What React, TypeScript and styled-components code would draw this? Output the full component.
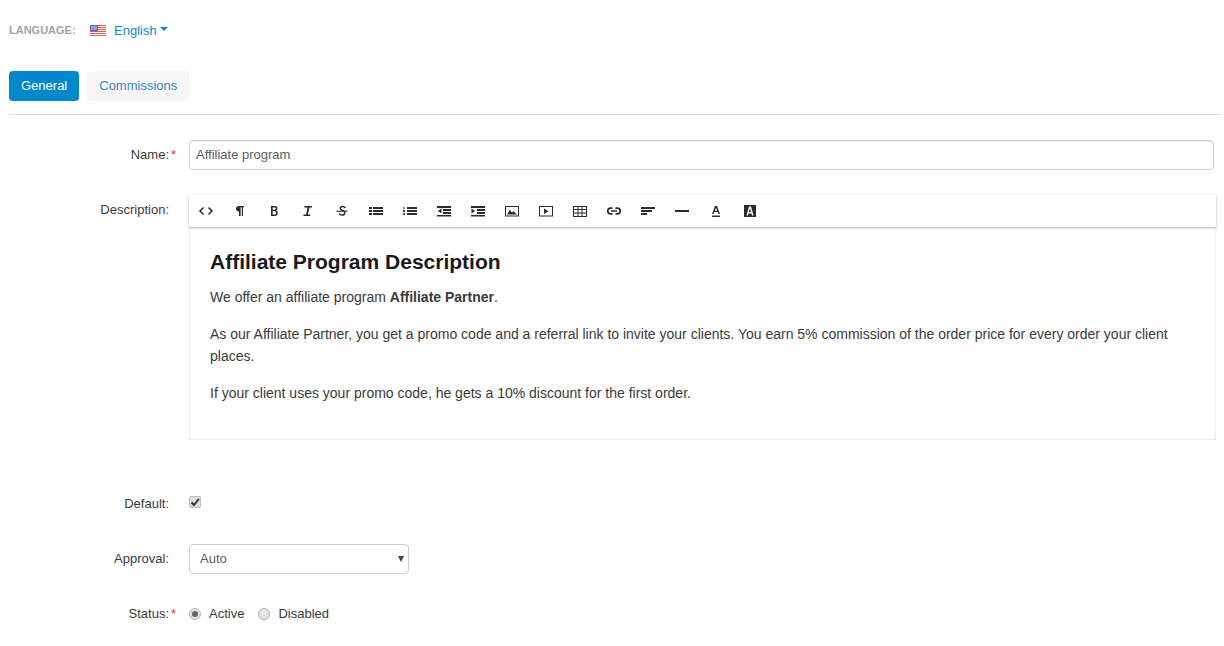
import React from "react";
import styled, { createGlobalStyle } from "styled-components";

const Global = createGlobalStyle`
  html, body { margin: 0; padding: 0; background: #fff; }
  body { font-family: "Liberation Sans", Arial, sans-serif; font-size: 13px; color: #333; }
`;
const Page = styled.div`
  width: 1224px; height: 646px; box-sizing: border-box; padding: 0 3px 0 9px; overflow: hidden;
`;
const LangBar = styled.div`
  display: flex; align-items: center; height: 20px; padding-top: 20px;
`;
const LangLabel = styled.span`
  font-size: 11px; font-weight: 700; color: #a3a3a3; width: 81px;
`;
const LangLink = styled.a`
  display: flex; align-items: center; color: #0d8acd; font-size: 13px; gap: 8px;
`;
const Caret = styled.span`
  display: inline-block; width: 0; height: 0; margin-left: -8px; margin-top: -2px;
  border-left: 4px solid transparent; border-right: 4px solid transparent; border-top: 4px solid #0d8acd;
`;
const Tabs = styled.div`
  display: flex; gap: 8px; margin-top: 31px; padding-bottom: 13px; border-bottom: 1px solid #ddd; height: 30px;
`;
const Tab = styled.div<{ $active?: boolean }>`
  height: 30px; line-height: 30px; padding: 0 12px; border-radius: 4px; font-size: 13px;
  background: ${p => (p.$active ? "#0088cc" : "#f6f6f6")}; color: ${p => (p.$active ? "#fff" : "#3f84c9")};
`;
const Row = styled.div<{ $top: number; $center?: boolean }>`
  display: flex; margin-top: ${p => p.$top}px; align-items: ${p => (p.$center ? "center" : "flex-start")};
`;
const Label = styled.div<{ $pad?: number; $raise?: number }>`
  width: 160px; flex: none; margin-right: 20px; text-align: right; font-size: 13px; color: #3a3a3a; position: relative;
  padding-top: ${p => p.$pad ?? 0}px; margin-bottom: ${p => p.$raise ?? 0}px;
`;
const Star = styled.span`
  position: absolute; left: 162px; top: 0; color: #e8303a; font-size: 13px;
`;
const TextInput = styled.div`
  width: 1025px; height: 30px; box-sizing: border-box; border: 1px solid #ccc; border-radius: 4px;
  padding: 0 6px; line-height: 28px; font-size: 13px; color: #5c5c5c;
  box-shadow: inset 0 1px 1px rgba(0,0,0,.075);
`;
const Editor = styled.div`
  width: 1028px;
`;
const Toolbar = styled.div`
  display: flex; width: 1027px; height: 32px; align-items: center; background: #fff;
  box-shadow: 0 1px 2px rgba(0,0,0,.3), 0 0 2px rgba(0,0,0,.06);
  position: relative;
`;
const ToolBtn = styled.div`
  width: 34px; height: 32px; display: flex; align-items: center; justify-content: center;
`;
const Body = styled.div`
  box-sizing: border-box; width: 1027px; height: 213px; border: 1px solid #eee; border-top: none;
  padding: 23px 20px 0 20px; font-size: 14px; line-height: 22px; color: #3a3a3a;
`;
const Heading = styled.h2`
  margin: 0 0 12px; font-size: 21px; line-height: 24px; font-weight: 700; color: #1a1a1a;
`;
const Para = styled.p`
  margin: 0 0 15px;
`;
const Check = styled.div`
  width: 12px; height: 12px; box-sizing: border-box; border-radius: 2px; background: #dcdcdc; border: 1px solid #bdbdbd;
  display: flex; align-items: center; justify-content: center;
`;
const SelectBox = styled.div`
  position: relative; width: 220px; height: 30px; box-sizing: border-box; border: 1px solid #ccc; border-radius: 4px;
  padding: 0 10px; line-height: 28px; font-size: 13px; color: #5c5c5c;
`;
const SelectArrow = styled.span`
  position: absolute; right: 4px; top: 11px; width: 0; height: 0;
  border-left: 3px solid transparent; border-right: 3px solid transparent; border-top: 6px solid #444;
`;
const Radios = styled.div`
  display: flex; align-items: center; font-size: 13px; color: #3a3a3a;
`;
const Radio = styled.span<{ $on?: boolean }>`
  width: 12px; height: 12px; box-sizing: border-box; border-radius: 50%; border: 1px solid #b5b5b5; background: #e4e4e4;
  display: inline-flex; align-items: center; justify-content: center; margin-right: 8px;
  &::after { content: ""; width: 6px; height: 6px; border-radius: 50%; background: ${p => (p.$on ? "#666" : "transparent")}; }
`;
const RadioText = styled.span`
  margin-right: 14px;
`;

const C = "#2b2b2b";
const Ico = ({ children }: { children: React.ReactNode }) => (
  <svg width="16" height="16" viewBox="0 0 16 16" fill={C}>{children}</svg>
);
const icons: React.ReactNode[] = [
  <path d="M5.500 4.500 2 8l3.500 3.500M10.500 4.500 14 8l-3.500 3.500" fill="none" stroke={C} strokeWidth="1.500" />,
  <path d="M7 13V8.500C5 8.500 4 7.200 4 5.700 4 4 5.200 3 7 3h5v1.200h-1V13H9.800V4.200H8.600V13z" />,
  <path fillRule="evenodd" d="M5 3h3.800C10.400 3 11.400 3.900 11.400 5.300c0 1-.5 1.700-1.300 2 1 .3 1.600 1.100 1.600 2.200C11.700 11.900 10.600 13 8.900 13H5zM6.700 4.400v2.300h1.800c.8 0 1.200-.5 1.200-1.150S9.300 4.400 8.500 4.400zM6.700 8.100v3.500h2c.8 0 1.300-.7 1.300-1.700S9.500 8.100 8.700 8.100z" />,
  <path d="M4.500 3H12v1.400H9.500L7.900 11.600H10.300V13H3.500v-1.400H6L7.600 4.400H4.200z" />,
  <g fill="none" stroke={C}>
    <path strokeWidth="1.400" d="M11.500 4.800C10.800 3.900 9.800 3.500 8.700 3.500 7.100 3.500 6.200 4.300 6.200 5.300c0 1.300 1.700 1.900 2.700 2.300 1 .4 1.900.9 1.900 2.100 0 1.400-1.200 2.400-2.800 2.400-1.100 0-2-.4-2.700-1.300" />
    <path strokeWidth="1.100" d="M2.500 8.200h11" />
  </g>,
  <path d="M1 4h3v2H1zM1 7h3v2H1zM1 10h3v2H1zM5 4h10v2H5zM5 7h10v2H5zM5 10h10v2H5z" />,
  <path d="M1.500 4h1v2h-1zM1 7h2v.7H2v.4h1V9H1zM1 10h2v2H1v-.6h1.200v-.2h-.9v-.4h.9v-.2H1zM5 4h10v2H5zM5 7h10v2H5zM5 10h10v2H5z" />,
  <path d="M1 3h14v2H1zM7 6h8v2H7zM7 9h8v2H7zM1 12h14v1.500H1zM5.500 5.500v5L1.800 8z" />,
  <path d="M1 3h14v2H1zM7 6h8v2H7zM7 9h8v2H7zM1 12h14v1.500H1zM1.500 5.500v5L5.200 8z" />,
  <path fillRule="evenodd" d="M1 3h14v10.500H1zM2 4v8.500h12V4zM3 11.500l2.800-4.500 2.200 2.500L9.500 8l3.500 3.500z" />,
  <path fillRule="evenodd" d="M1 3h14v10.500H1zM2 4v8.500h12V4zM6 5.500 10.500 8.200 6 11z" />,
  <path fillRule="evenodd" d="M1 3h14v11H1zM2 4v2h3.500V4zM6.500 4v2h3V4zM10.500 4v2H14V4zM2 7v2.500h3.500V7zM6.500 7v2.500h3V7zM10.500 7v2.500H14V7zM2 10.500V13h3.500v-2.500zM6.500 10.500V13h3v-2.500zM10.500 10.500V13H14v-2.500z" />,
  <path d="M6.500 5.200H4.600a2.800 2.800 0 0 0 0 5.600h1.900M9.500 5.200h1.900a2.800 2.800 0 0 1 0 5.600H9.500M5 8h6" fill="none" stroke={C} strokeWidth="1.700" />,
  <path d="M1 4h14v2H1zM1 7h11v2H1zM1 10h6v2H1z" />,
  <path d="M1 7h14v2H1z" />,
  <path fillRule="evenodd" d="M7 3h2l3 8h-1.600L9.700 9H6.300l-.7 2H4zM8 4.800 6.800 7.800h2.400zM4 12.500h8V14H4z" />,
  <path fillRule="evenodd" d="M2 2h12v12H2zM7 3.500 4.500 12.500H6l.5-2h3l.5 2h1.500L9 3.500zM8 5.500l1.100 3.700H6.900z" />,
];

const Flag = () => (
  <svg width="16" height="11" viewBox="0 0 16 11">
    <rect width="16" height="11" fill="#fff" />
    {[0, 2, 4, 6, 8, 10].map(y => <rect key={y} y={y} width="16" height="1" fill="#e0584f" />)}
    <rect width="8" height="6" fill="#4a63d8" />
    <rect x="1" y="1.500" width="6" height="1" fill="#cfd6f2" />
    <rect x="1" y="3.500" width="6" height="1" fill="#cfd6f2" />
    <rect width="16" height="11" fill="none" stroke="#999" strokeWidth=".5" />
  </svg>
);

export default function App() {
  return (
    <Page>
      <Global />
      <LangBar>
        <LangLabel>LANGUAGE:</LangLabel>
        <LangLink><Flag />English&nbsp;<Caret /></LangLink>
      </LangBar>
      <Tabs>
        <Tab $active>General</Tab>
        <Tab>Commissions</Tab>
      </Tabs>
      <Row $top={25} $center>
        <Label $raise={2}>Name:<Star>*</Star></Label>
        <TextInput>Affiliate program</TextInput>
      </Row>
      <Row $top={25}>
        <Label $pad={7}>Description:</Label>
        <Editor>
          <Toolbar>{icons.map((ic, i) => <ToolBtn key={i}><Ico>{ic}</Ico></ToolBtn>)}</Toolbar>
          <Body>
            <Heading>Affiliate Program Description</Heading>
            <Para>We offer an affiliate program <b>Affiliate Partner</b>.</Para>
            <Para>As our Affiliate Partner, you get a promo code and a referral link to invite your clients. You earn 5% commission of the order price for every order your client places.</Para>
            <Para>If your client uses your promo code, he gets a 10% discount for the first order.</Para>
          </Body>
        </Editor>
      </Row>
      <Row $top={56}>
        <Label>Default:</Label>
        <Check>
          <svg width="10" height="10" viewBox="0 0 10 10"><path d="M1.500 5.500 4 8l4.800-6" fill="none" stroke="#333" strokeWidth="2" /></svg>
        </Check>
      </Row>
      <Row $top={33} $center>
        <Label $raise={2}>Approval:</Label>
        <SelectBox>Auto<SelectArrow /></SelectBox>
      </Row>
      <Row $top={32} $center>
        <Label>Status:<Star>*</Star></Label>
        <Radios>
          <Radio $on /><RadioText>Active</RadioText>
          <Radio /><RadioText>Disabled</RadioText>
        </Radios>
      </Row>
    </Page>
  );
}
